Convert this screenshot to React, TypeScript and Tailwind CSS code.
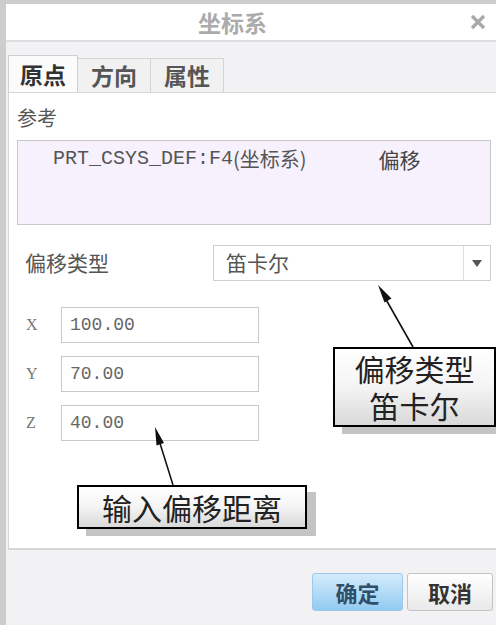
const cjk = "font-['Noto_Sans_CJK_SC',sans-serif]";
const mono = "font-['Liberation_Mono','Noto_Sans_CJK_SC',monospace]";

function Tab({ label, active }: { label: string; active?: boolean }) {
  return (
    <div
      className={
        active
          ? "flex h-[37px] w-[70px] items-center justify-center border border-b-0 border-[#cfcfcf] bg-[#fbfbfb] text-[23px] font-bold text-[#333]"
          : "flex h-[34px] w-[73px] items-center justify-center border border-b-0 border-l-0 border-[#d4d4d4] bg-[#f1f1f1] text-[23px] font-bold text-[#555]"
      }
    >
      {label}
    </div>
  );
}

function Field({ axis, value }: { axis: string; value: string }) {
  return (
    <div className="flex h-[36px] items-center">
      <span className="w-[44px] pl-[9px] font-['Liberation_Serif',serif] text-[16px] text-[#777]">
        {axis}
      </span>
      <div className={`flex h-full w-[198px] items-center border border-[#c8c8c8] bg-white pl-[8px] text-[18px] text-[#666] ${mono}`}>
        {value}
      </div>
    </div>
  );
}

function Callout({
  lines,
  className,
}: {
  lines: string[];
  className: string;
}) {
  return (
    <div className={`absolute ${className}`}>
      <div className="absolute left-[9px] top-[7px] h-full w-full bg-[#c4c4c4]" />
      <div className="relative flex h-full w-full flex-col items-center justify-center border-2 border-black bg-gradient-to-b from-white via-[#f4f4f4] to-[#d9d9d9] text-[30px] text-[#222]">
        {lines.map((l) => (
          <div key={l} className="h-[37px] leading-[37px]">
            {l}
          </div>
        ))}
      </div>
    </div>
  );
}

export default function App() {
  return (
    <div className={`relative flex h-[625px] w-[496px] flex-col overflow-hidden border-l-[6px] border-t-[4px] border-[#cdcdcd] bg-[#f2f2f4] ${cjk}`}>
      {/* title bar */}
      <div className="flex h-[38px] shrink-0 items-center justify-between border-b-2 border-[#dedede] bg-white pl-[192px] pr-[10px]">
        <span className="text-[23px] font-bold text-[#ababab]">坐标系</span>
        <svg width="16" height="16" viewBox="0 0 16 16">
          <path d="M2 2 L14 14 M14 2 L2 14" stroke="#a8a8a8" strokeWidth="3.2" />
        </svg>
      </div>

      {/* tabs */}
      <div className="mt-[13px] flex items-end pl-[2px]">
        <Tab label="原点" active />
        <Tab label="方向" />
        <Tab label="属性" />
      </div>

      {/* panel */}
      <div className="ml-[2px] flex h-[458px] shrink-0 flex-col border-b-2 border-l border-t border-[#d6d6d6] bg-white pl-[8px] pr-[5px]">
        <div className="mt-[13px] text-[20px] leading-[24px] text-[#555]">参考</div>
        <div className="mt-[10px] flex h-[85px] items-start border border-[#c8c8c8] bg-[#f6f1fc] pt-[5px]">
          <span className={`ml-[35px] text-[20px] leading-[26px] text-[#555] ${mono}`}>
            PRT_CSYS_DEF:F4
          </span>
          <span className="text-[20px] leading-[26px] text-[#555]">(坐标系)</span>
          <span className="ml-[72px] text-[21px] leading-[26px] text-[#444]">偏移</span>
        </div>

        <div className="mt-[20px] flex h-[36px] items-center">
          <span className="w-[196px] pl-[8px] text-[21px] text-[#555]">偏移类型</span>
          <div className="flex h-full flex-1 items-center border border-[#cfcfcf] bg-white">
            <span className="flex-1 pl-[12px] text-[21px] text-[#555]">笛卡尔</span>
            <div className="flex h-full w-[27px] items-center justify-center border-l border-[#dedede]">
              <svg width="10" height="7" viewBox="0 0 10 7">
                <path d="M0 0 H10 L5 7 Z" fill="#555" />
              </svg>
            </div>
          </div>
        </div>

        <div className="mt-[26px] flex flex-col gap-[13px]">
          <Field axis="X" value="100.00" />
          <Field axis="Y" value="70.00" />
          <Field axis="Z" value="40.00" />
        </div>
      </div>

      {/* footer */}
      <div className="flex flex-1 items-start justify-end gap-[4px] pr-[3px] pt-[23px]">
        <button className="h-[38px] w-[91px] rounded-[3px] border border-[#9cc9ea] bg-gradient-to-b from-[#d4ebfb] to-[#92cbf1] text-[22px] font-bold text-[#2f4f6a]">
          确定
        </button>
        <button className="h-[38px] w-[86px] rounded-[3px] border border-[#c4c4c4] bg-gradient-to-b from-white to-[#e9e9e9] text-[22px] font-bold text-[#333]">
          取消
        </button>
      </div>

      {/* annotations */}
      <svg className="pointer-events-none absolute left-[-6px] top-[-4px]" width="496" height="625">
        <line x1="413" y1="347" x2="384" y2="296" stroke="#111" strokeWidth="1.6" />
        <polygon points="378,285 391.5,298.5 384.5,302.5" fill="#111" />
        <line x1="173" y1="485" x2="158" y2="437" stroke="#111" strokeWidth="1.6" />
        <polygon points="155,427 164,443 156.5,445.5" fill="#111" />
      </svg>
      <Callout lines={["偏移类型", "笛卡尔"]} className="left-[327px] top-[343px] h-[80px] w-[163px]" />
      <Callout lines={["输入偏移距离"]} className="left-[71px] top-[481px] h-[44px] w-[230px]" />
    </div>
  );
}
